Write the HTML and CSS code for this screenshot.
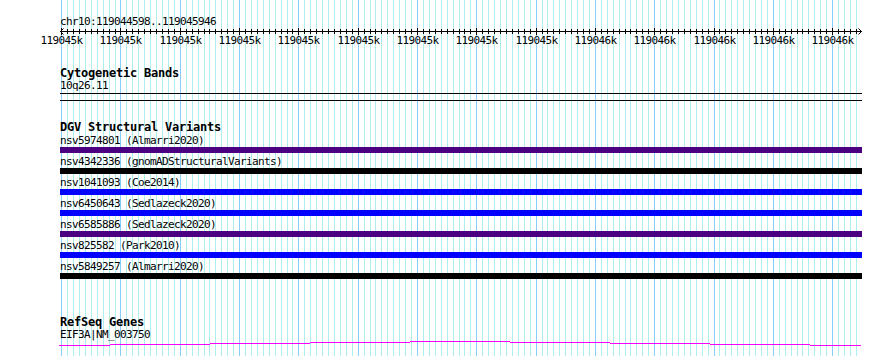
FILE: index.html
```html
<!DOCTYPE html>
<html lang="en">
  <head>
    <meta charset="UTF-8" />
    <meta name="viewport" content="width=device-width, initial-scale=1.0" />
    <title>chr10:119044598..119045946</title>
    <link rel="stylesheet" href="styles.css">
  </head>
  <body>
    <div class="browser">
      <!-- grid behind all tracks, filled in by the script -->
      <svg class="grid" id="grid" width="890" height="356"></svg>

      <div class="panel">
        <div class="lane">
          <div class="locus">chr10:119044598..119045946</div>
        </div>
        <svg class="ruler" id="ruler" width="890" height="20"></svg>

        <section class="track track-bands">
          <div class="lane">
            <div class="track-title">Cytogenetic Bands</div>
            <div class="band-name">10q26.11</div>
            <div class="band"></div>
          </div>
        </section>

        <section class="track track-dgv">
          <div class="lane">
            <div class="track-title">DGV Structural Variants</div>
            <div class="sv">
              <div class="feature-name">nsv5974801 (Almarri2020)</div>
              <div class="sv-bar loss"></div>
            </div>
            <div class="sv">
              <div class="feature-name">nsv4342336 (gnomADStructuralVariants)</div>
              <div class="sv-bar other"></div>
            </div>
            <div class="sv">
              <div class="feature-name">nsv1041093 (Coe2014)</div>
              <div class="sv-bar gain"></div>
            </div>
            <div class="sv">
              <div class="feature-name">nsv6450643 (Sedlazeck2020)</div>
              <div class="sv-bar gain"></div>
            </div>
            <div class="sv">
              <div class="feature-name">nsv6585886 (Sedlazeck2020)</div>
              <div class="sv-bar loss"></div>
            </div>
            <div class="sv">
              <div class="feature-name">nsv825582 (Park2010)</div>
              <div class="sv-bar gain"></div>
            </div>
            <div class="sv">
              <div class="feature-name">nsv5849257 (Almarri2020)</div>
              <div class="sv-bar other"></div>
            </div>
          </div>
        </section>

        <section class="track track-genes">
          <div class="lane">
            <div class="track-title">RefSeq Genes</div>
            <div class="gene-name">EIF3A|NM_003750</div>
          </div>
          <svg class="gene" width="890" height="7" shape-rendering="crispEdges">
            <g fill="#ff00ff">
              <rect x="59" y="5" width="51" height="1" />
              <rect x="110" y="4" width="100" height="1" />
              <rect x="210" y="3" width="100" height="1" />
              <rect x="310" y="2" width="100" height="1" />
              <rect x="410" y="1" width="100" height="1" />
              <rect x="510" y="2" width="100" height="1" />
              <rect x="610" y="3" width="100" height="1" />
              <rect x="710" y="4" width="100" height="1" />
              <rect x="810" y="5" width="51" height="1" />
            </g>
          </svg>
        </section>
      </div>
    </div>

    <script>
      const START = 119044598;
      const END = 119045946;
      const LEFT = 60;
      const WIDTH = 800;
      const scale = WIDTH / (END - START + 1);
      const SVG_NS = "http://www.w3.org/2000/svg";

      function xOf(bp) {
        return Math.round(LEFT + (bp - START) * scale);
      }

      function addRect(svg, x, y, w, h, fill) {
        const r = document.createElementNS(SVG_NS, "rect");
        r.setAttribute("x", x);
        r.setAttribute("y", y);
        r.setAttribute("width", w);
        r.setAttribute("height", h);
        r.setAttribute("fill", fill);
        svg.appendChild(r);
      }

      const firstTick = Math.ceil(START / 10) * 10;

      // grid: minor lines every 10bp, major every 100bp
      const grid = document.getElementById("grid");
      const majors = [];
      for (let bp = firstTick; bp <= END; bp += 10) {
        if (bp % 100 === 0) {
          majors.push(bp);
        } else {
          addRect(grid, xOf(bp), 0, 1, 356, "#afeeee");
        }
      }
      majors.forEach((bp) => addRect(grid, xOf(bp), 0, 1, 356, "#87cefa"));

      // ruler
      const ruler = document.getElementById("ruler");
      addRect(ruler, LEFT, 4, 802, 1, "#000");
      for (let bp = firstTick; bp <= END; bp += 10) {
        const x = xOf(bp);
        if (bp % 100 === 0) {
          addRect(ruler, x, 1, 1, 7, "#000");
          const t = document.createElementNS(SVG_NS, "text");
          t.setAttribute("x", x + 0.5);
          t.setAttribute("y", 17);
          t.setAttribute("class", "tick-label");
          t.textContent = Math.round(bp / 1000) + "k";
          ruler.appendChild(t);
        } else {
          addRect(ruler, x, 2, 1, 5, "#000");
        }
      }
      [
        "M63.5 1.5 L60.5 4.5 L63.5 7.5",
        "M858.5 1.5 L861.5 4.5 L858.5 7.5",
      ].forEach((d) => {
        const p = document.createElementNS(SVG_NS, "path");
        p.setAttribute("d", d);
        p.setAttribute("class", "arrow");
        ruler.appendChild(p);
      });
    </script>
  </body>
</html>
```

FILE: styles.css
```css
body {
  margin: 0;
  background-color: white;
  font-family: "DejaVu Sans Mono", "Liberation Mono", monospace;
  color: black;
}
.browser {
  position: relative;
  width: 890px;
  height: 356px;
  overflow: hidden;
  background-color: white;
}
.grid {
  position: absolute;
  top: 0;
  left: 0;
}
.panel {
  position: relative;
  z-index: 1;
}
.lane {
  padding-left: 60px;
}
.locus,
.band-name,
.feature-name,
.gene-name,
.tick-label {
  font-size: 11px;
  letter-spacing: -0.62px;
  white-space: nowrap;
}
.locus {
  padding-top: 16px;
  line-height: 11px;
}
.ruler {
  display: block;
}
.tick-label {
  font-family: "DejaVu Sans Mono", "Liberation Mono", monospace;
  text-anchor: middle;
  fill: black;
}
.arrow {
  fill: none;
  stroke: black;
  stroke-width: 1;
}
.track-title {
  font-size: 12px;
  font-weight: bold;
  letter-spacing: -0.22px;
  line-height: 14px;
  white-space: nowrap;
}
.track-bands {
  margin-top: 19px;
}
.band-name {
  line-height: 12px;
}
.band {
  width: 802px;
  height: 6px;
  margin-top: 1px;
  border-top: 1px solid black;
  border-bottom: 1px solid black;
}
.track-dgv {
  margin-top: 19px;
}
.sv {
  padding-bottom: 2px;
}
.feature-name {
  line-height: 13px;
}
.sv-bar {
  width: 802px;
  height: 6px;
}
.sv-bar.loss {
  background-color: #4b0082;
}
.sv-bar.gain {
  background-color: #0000ff;
}
.sv-bar.other {
  background-color: black;
}
.track-genes {
  margin-top: 34px;
}
.gene-name {
  line-height: 11px;
}
.gene {
  display: block;
}
```
